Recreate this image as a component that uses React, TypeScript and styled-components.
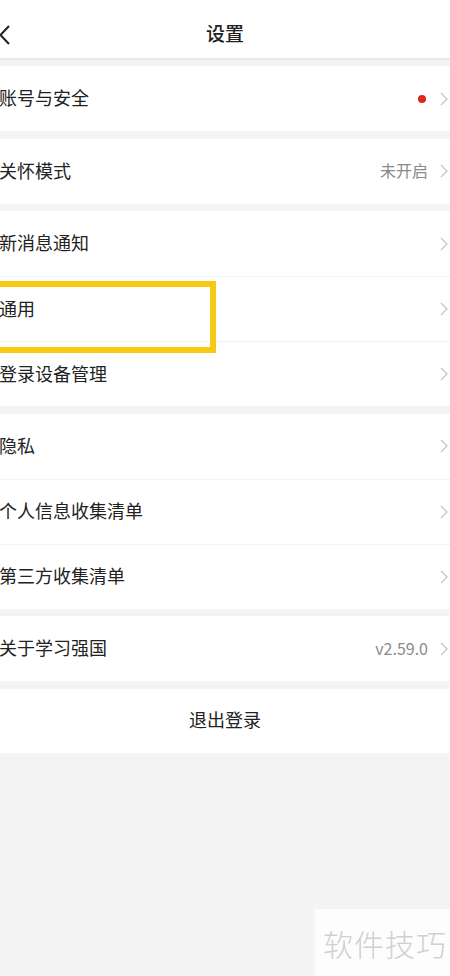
import styled, { createGlobalStyle } from "styled-components";

const GlobalStyle = createGlobalStyle`
  html, body {
    margin: 0;
    padding: 0;
    background: #f4f4f4;
    font-family: "Noto Sans CJK SC", "Noto Sans", sans-serif;
  }
`;

type Item = {
  label: string;
  value?: string;
  dot?: boolean;
  highlight?: boolean;
};

const groups: Item[][] = [
  [{ label: "账号与安全", dot: true }],
  [{ label: "关怀模式", value: "未开启" }],
  [{ label: "新消息通知" }, { label: "通用", highlight: true }, { label: "登录设备管理" }],
  [{ label: "隐私" }, { label: "个人信息收集清单" }, { label: "第三方收集清单" }],
  [{ label: "关于学习强国", value: "v2.59.0" }],
];

function Chevron() {
  return (
    <svg width="8" height="14" viewBox="0 0 8 14">
      <path d="M1 1l6 6-6 6" fill="none" stroke="#c4c4c4" strokeWidth="1.2" />
    </svg>
  );
}

function BackIcon() {
  return (
    <svg width="12" height="20" viewBox="0 0 12 20">
      <path d="M10 1L1.5 10l8.5 9" fill="none" stroke="#222" strokeWidth="2" />
    </svg>
  );
}

function App() {
  return (
    <>
      <GlobalStyle />
      <Page>
        <Header>
          <BackButton>
            <BackIcon />
          </BackButton>
          <Title>设置</Title>
        </Header>

        {groups.map((group, gi) => (
          <Group key={gi}>
            {group.map((item) => (
              <Row key={item.label}>
                <Label>{item.label}</Label>
                <Trail>
                  {item.dot && <Dot />}
                  {item.value && <Value>{item.value}</Value>}
                  <Chevron />
                </Trail>
                {item.highlight && <Highlight />}
              </Row>
            ))}
          </Group>
        ))}

        <Group>
          <Logout>退出登录</Logout>
        </Group>
      </Page>
      <Watermark>软件技巧</Watermark>
    </>
  );
}
export default App;

const Page = styled.div`
  width: 450px;
  min-height: 976px;
  background: #f4f4f4;
  display: flex;
  flex-direction: column;
  gap: 7.5px;
  overflow: hidden;
`;

const Header = styled.header`
  position: relative;
  height: 58px;
  background: #fff;
  display: flex;
  align-items: center;
  justify-content: center;
  border-bottom: 2px solid #e9e9e9;
  margin-bottom: -1.5px;
`;

const BackButton = styled.div`
  position: absolute;
  left: -1px;
  top: 25px;
  display: flex;
`;

const Title = styled.h1`
  margin: 0;
  font-size: 19px;
  font-weight: 500;
  color: #222;
  padding-top: 6px;
`;

const Group = styled.section`
  background: #fff;
  display: flex;
  flex-direction: column;
`;

const Row = styled.div`
  position: relative;
  box-sizing: border-box;
  height: 65px;
  display: flex;
  align-items: center;
  justify-content: space-between;
  padding: 0 2px 3px 0;
  & + & {
    border-top: 1px solid #f3f3f3;
  }
`;

const Label = styled.span`
  font-size: 18px;
  color: #222;
  margin-left: -1px;
`;

const Trail = styled.div`
  display: flex;
  align-items: center;
  gap: 12px;
  padding-top: 3px;
`;

const Value = styled.span`
  font-size: 16px;
  color: #8a8a8a;
  margin-top: -2px;
`;

const Dot = styled.span`
  width: 8px;
  height: 8px;
  border-radius: 50%;
  background: #d8281f;
  margin-right: 2px;
`;

const Highlight = styled.div`
  position: absolute;
  left: -10px;
  top: 4px;
  width: 226px;
  height: 72px;
  box-sizing: border-box;
  border: 6px solid #f7c814;
  z-index: 1;
`;

const Logout = styled.button`
  height: 64px;
  border: none;
  background: #fff;
  font-family: inherit;
  font-size: 18px;
  color: #222;
  padding: 0 0 3px;
`;

const Watermark = styled.div`
  position: fixed;
  right: 0;
  bottom: 0;
  width: 135px;
  height: 67px;
  background: #fdfdfd;
  color: #d0d0d0;
  font-size: 30px;
  font-weight: 300;
  display: flex;
  align-items: center;
  justify-content: flex-end;
  padding-right: 3px;
  box-sizing: border-box;
  letter-spacing: 1px;
`;
